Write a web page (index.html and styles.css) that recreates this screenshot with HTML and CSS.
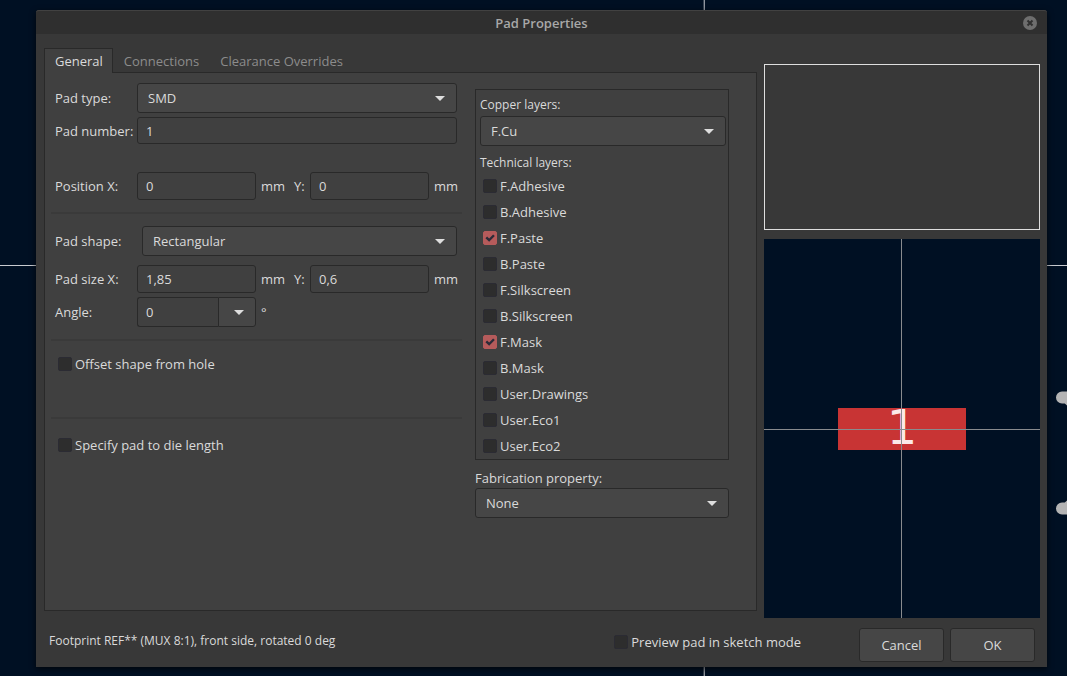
FILE: index.html
```html
<!DOCTYPE html>
<html lang="en">
<head>
<meta charset="utf-8">
<title>Pad Properties</title>
<link rel="stylesheet" href="styles.css">
</head>
<body>
<svg class="board" aria-hidden="true">
  <line x1="66%" y1="0" x2="66%" y2="100%" stroke="#c8cbd0"/>
  <line x1="0" y1="265.5" x2="100%" y2="265.5" stroke="#c8cbd0"/>
  <path d="M1062 397.500H1067L1078 407M1062 508.500H1067L1078 499" fill="none" stroke="#b4b4b4" stroke-width="12" stroke-linecap="round"/>
</svg>
<main class="dialog">
  <header class="titlebar">
    <h1 class="title">Pad Properties</h1>
    <button class="close" type="button" aria-label="Close">
      <svg width="14" height="14" viewBox="0 0 14 14"><circle cx="7" cy="7" r="7" fill="#6e6e6e"/><path d="M4.500 4.500l5 5M9.500 4.500l-5 5" stroke="#303030" stroke-width="2"/></svg>
    </button>
  </header>
  <form class="content">
    <div class="workspace">
      <section class="notebook">
        <div class="tabs" role="tablist">
          <button class="tab tab-active" type="button" role="tab" aria-selected="true">General</button>
          <button class="tab" type="button" role="tab" aria-selected="false">Connections</button>
          <button class="tab" type="button" role="tab" aria-selected="false">Clearance Overrides</button>
        </div>
        <div class="page" role="tabpanel">
          <div class="settings">
            <div class="group group-identity">
              <div class="row">
                <label class="name" for="type">Pad type:</label>
                <span class="combo"><select id="type"><option>SMD</option></select></span>
              </div>
              <div class="row">
                <label class="name" for="number">Pad number:</label>
                <input class="field field-short" id="number" type="text" value="1">
              </div>
              <div class="row row-position">
                <label class="name" for="posx">Position X:</label>
                <input class="field" id="posx" type="text" value="0">
                <span class="unit">mm</span>
                <label class="axis" for="posy">Y:</label>
                <input class="field" id="posy" type="text" value="0">
                <span class="unit">mm</span>
              </div>
            </div>
            <hr class="rule">
            <div class="group group-shape">
              <div class="row row-shape">
                <label class="name" for="shape">Pad shape:</label>
                <span class="combo combo-inset"><select id="shape"><option>Rectangular</option></select></span>
              </div>
              <div class="row">
                <label class="name" for="sizex">Pad size X:</label>
                <input class="field" id="sizex" type="text" value="1,85">
                <span class="unit">mm</span>
                <label class="axis" for="sizey">Y:</label>
                <input class="field" id="sizey" type="text" value="0,6">
                <span class="unit">mm</span>
              </div>
              <div class="row">
                <label class="name" for="angle">Angle:</label>
                <span class="editcombo">
                  <input class="field" id="angle" type="text" value="0">
                  <button class="drop" type="button" aria-label="Choose angle"></button>
                </span>
                <span class="unit">°</span>
                <span class="axis"></span>
                <span class="spacer"></span>
                <span class="unit"></span>
              </div>
            </div>
            <hr class="rule">
            <div class="group group-offset">
              <label class="check"><input type="checkbox">Offset shape from hole</label>
            </div>
            <hr class="rule">
            <div class="group group-die">
              <label class="check"><input type="checkbox">Specify pad to die length</label>
            </div>
          </div>
          <div class="layers">
            <div class="layerbox">
              <label class="caption" for="copper">Copper layers:</label>
              <span class="combo"><select id="copper"><option>F.Cu</option></select></span>
              <div class="caption caption-technical">Technical layers:</div>
              <label class="check"><input type="checkbox">F.Adhesive</label>
              <label class="check"><input type="checkbox">B.Adhesive</label>
              <label class="check"><input type="checkbox" checked>F.Paste</label>
              <label class="check"><input type="checkbox">B.Paste</label>
              <label class="check"><input type="checkbox">F.Silkscreen</label>
              <label class="check"><input type="checkbox">B.Silkscreen</label>
              <label class="check"><input type="checkbox" checked>F.Mask</label>
              <label class="check"><input type="checkbox">B.Mask</label>
              <label class="check"><input type="checkbox">User.Drawings</label>
              <label class="check"><input type="checkbox">User.Eco1</label>
              <label class="check"><input type="checkbox">User.Eco2</label>
            </div>
            <label class="fabrication" for="fab">Fabrication property:</label>
            <span class="combo"><select id="fab"><option>None</option></select></span>
          </div>
        </div>
      </section>
      <aside class="previews">
        <div class="legend"></div>
        <svg class="canvas" viewBox="0 0 276 379" preserveAspectRatio="xMidYMid slice" role="img" aria-label="Pad preview">
          <rect x="74" y="169" width="128" height="42" fill="#c83434"/>
          <text class="padnumber" x="138" y="205" text-anchor="middle">1</text>
          <path d="M137.500 0V379M0 190.500H276" stroke="#898b8e"/>
        </svg>
      </aside>
    </div>
    <footer class="footer">
      <span class="status">Footprint REF** (MUX 8:1), front side, rotated 0 deg</span>
      <label class="check"><input type="checkbox">Preview pad in sketch mode</label>
      <div class="actions">
        <button class="action" type="button">Cancel</button>
        <button class="action" type="button">OK</button>
      </div>
    </footer>
  </form>
</main>
</body>
</html>
```

FILE: styles.css
```css
* {
  box-sizing: border-box;
}

body {
  display: flex;
  min-height: 100vh;
  margin: 0;
  padding: 10px 20px 9px 36px;
  overflow-x: hidden;
  background: #001023;
  color: #dadada;
  font: 13px/18px "Open Sans", "Noto Sans", sans-serif;
}

button,
input,
select {
  margin: 0;
  color: inherit;
  font: inherit;
}

.board {
  position: absolute;
  inset: 0;
  width: 100%;
  height: 100%;
}

.dialog {
  position: relative;
  display: flex;
  flex: 1;
  flex-direction: column;
  border-radius: 3px 3px 0 0;
  background: #383838;
  box-shadow: 0 2px 6px #000000b0;
}

.titlebar {
  display: grid;
  grid-template-columns: 1fr auto 1fr;
  align-items: center;
  height: 24px;
  padding: 0 10px;
  border-top: 1px solid #414141;
  border-radius: 3px 3px 0 0;
  background: #2f2f2f;
}

.title {
  grid-column: 2;
  margin: 0;
  color: #a8a8a8;
  font-size: 13px;
  font-weight: 600;
}

.close {
  display: flex;
  justify-self: end;
  padding: 0;
  border: 0;
  background: none;
}

.content {
  display: flex;
  flex: 1;
  flex-direction: column;
}

.workspace {
  display: flex;
  flex: 1;
  gap: 7px;
  padding: 14px 7px 0 8px;
}

.notebook {
  display: flex;
  flex: 1;
  flex-direction: column;
  padding-bottom: 7px;
}

.tabs {
  display: flex;
  height: 25px;
  margin-bottom: -1px;
}

.tab {
  padding: 0 9px 0 10px;
  border: 1px solid transparent;
  border-bottom: 0;
  background: none;
  color: #8c8c8c;
  white-space: nowrap;
}

.tab-active {
  z-index: 1;
  border-color: #292929;
  background: #404040;
  color: #dadada;
}

.page {
  display: flex;
  flex: 1;
  gap: 13px;
  padding: 10px 27px 0 6px;
  border: 1px solid #292929;
  background: #404040;
}

.settings {
  flex: 1;
}

.group {
  display: flex;
  flex-direction: column;
  gap: 4px;
  padding: 0 5px 0 4px;
}

.group-identity {
  height: 129px;
}

.group-shape {
  height: 125px;
  padding-top: 12px;
}

.group-offset {
  height: 76px;
  padding-top: 10px;
}

.group-die {
  padding-top: 13px;
}

.row {
  display: flex;
  align-items: center;
}

.row-position {
  padding-top: 24px;
}

.row-shape {
  padding-bottom: 5px;
}

.rule {
  height: 2px;
  margin: 0;
  border: 0;
  background: #3a3a3a;
}

.name {
  flex: none;
  width: 82px;
  white-space: nowrap;
}

.combo {
  position: relative;
  display: block;
  flex: 1;
}

.combo-inset {
  margin-left: 5px;
}

.combo select {
  display: block;
  width: 100%;
  height: 30px;
  padding: 0 30px 0 10px;
  border: 1px solid #292929;
  border-radius: 3px;
  appearance: none;
  background: #464646;
}

.combo::after {
  position: absolute;
  top: 13px;
  right: 12px;
  border: 5px solid transparent;
  border-top-color: #dedede;
  border-bottom: 0;
  content: "";
  pointer-events: none;
}

.field {
  flex: 1;
  width: 0;
  min-width: 0;
  height: 28px;
  padding: 0 8px;
  border: 1px solid #292929;
  border-radius: 3px;
  background: #404040;
}

.field-short {
  height: 27px;
}

.unit {
  flex: none;
  width: 28px;
  padding-left: 5px;
}

.axis {
  flex: none;
  width: 26px;
  padding-left: 10px;
}

.spacer {
  flex: 1;
}

.editcombo {
  display: flex;
  flex: 1;
  min-width: 0;
}

.editcombo .field {
  height: 30px;
  border-right: 0;
  border-radius: 3px 0 0 3px;
}

.drop {
  display: grid;
  flex: none;
  place-items: center;
  width: 38px;
  padding: 0 0 0 3px;
  border: 1px solid #292929;
  border-radius: 0 3px 3px 0;
  background: #464646;
}

.drop::after {
  border: 5px solid transparent;
  border-top-color: #dedede;
  border-bottom: 0;
  content: "";
}

.check {
  display: flex;
  align-items: center;
  gap: 3px;
  height: 26px;
  padding-left: 3px;
  white-space: nowrap;
}

.check input {
  display: grid;
  flex: none;
  width: 14px;
  height: 14px;
  border: 1px solid #2b2b33;
  border-radius: 2px;
  appearance: none;
  background: #2d2d2d;
}

.check input:checked {
  border-color: #b55b5b;
  background: #b55b5b;
}

.check input:checked::before {
  background: #2b2b38;
  clip-path: polygon(12% 52%, 26% 38%, 43% 55%, 76% 20%, 90% 34%, 43% 82%);
  content: "";
}

.layers {
  flex: none;
  width: 254px;
  padding-top: 6px;
}

.layerbox {
  padding: 5px 2px 0 4px;
  border: 1px solid #292929;
}

.caption {
  display: block;
  height: 21px;
  padding-top: 1px;
  font-size: 12px;
}

.caption-technical {
  height: 27px;
  padding-top: 8px;
}

.fabrication {
  display: block;
  height: 28px;
  padding-top: 9px;
}

.previews {
  display: flex;
  flex: none;
  flex-direction: column;
  gap: 9px;
  width: 276px;
  padding-top: 16px;
}

.legend {
  height: 166px;
  border: 1px solid #dedede;
}

.canvas {
  flex: 1;
  width: 100%;
  min-height: 0;
  background: #001023;
}

.padnumber {
  fill: #fbe9e9;
  font: 48px "DejaVu Sans", sans-serif;
}

.footer {
  display: flex;
  align-items: flex-start;
  height: 49px;
  padding: 10px 12px 0 13px;
}

.status {
  flex: 1;
  padding-top: 4px;
  font-size: 12px;
}

.footer .check {
  height: 28px;
}

.actions {
  display: flex;
  gap: 6px;
  margin-left: 58px;
}

.action {
  width: 85px;
  height: 34px;
  border: 1px solid #292929;
  border-radius: 3px;
  background: #464646;
}
```
